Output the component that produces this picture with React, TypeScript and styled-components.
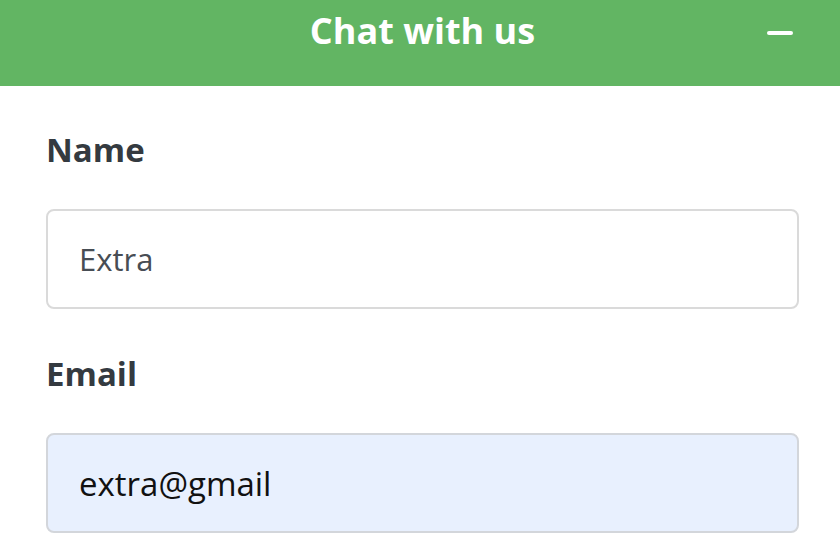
import React, { useState } from "react";
import styled, { createGlobalStyle } from "styled-components";

const Global = createGlobalStyle`
  html, body {
    margin: 0;
    padding: 0;
    background: #ffffff;
    overflow: hidden;
  }
  * {
    box-sizing: border-box;
  }
`;

function App() {
  const [name, setName] = useState("Extra");
  const [email, setEmail] = useState("extra@gmail");

  return (
    <>
      <Global />
      <S.Widget>
        <S.Header>
          <span />
          <S.Title>Chat with us</S.Title>
          <S.MinButton aria-label="Minimize">
            <S.MinBar />
          </S.MinButton>
        </S.Header>
        <S.Form>
          <S.Field>
            <S.Label htmlFor="name">Name</S.Label>
            <S.Input id="name" value={name} onChange={(e) => setName(e.target.value)} />
          </S.Field>
          <S.Field>
            <S.Label htmlFor="email">Email</S.Label>
            <S.Input
              id="email"
              $autofilled
              value={email}
              onChange={(e) => setEmail(e.target.value)}
            />
          </S.Field>
        </S.Form>
      </S.Widget>
    </>
  );
}

const S = {
  Widget: styled.div`
    width: 845px;
    height: 544px;
    background: #fff;
    font-family: "Open Sans", "Noto Sans", sans-serif;
  `,

  Header: styled.div`
    height: 86px;
    background: #62b563;
    display: grid;
    grid-template-columns: 1fr auto 1fr;
    align-items: start;
    padding: 13px 52px 0 52px;
  `,

  Title: styled.h1`
    margin: 0;
    color: #fff;
    font-size: 36px;
    font-weight: 700;
    line-height: 36px;
  `,

  MinButton: styled.button`
    justify-self: end;
    margin-top: 2px;
    background: none;
    border: none;
    padding: 0;
    width: 26px;
    height: 36px;
    display: flex;
    align-items: center;
    cursor: pointer;
  `,

  MinBar: styled.span`
    display: block;
    width: 26px;
    height: 4px;
    border-radius: 2px;
    background: #fff;
  `,

  Form: styled.div`
    padding: 32px 46px 0 46px;
    display: flex;
    flex-direction: column;
    gap: 33px;
  `,

  Field: styled.div`
    display: flex;
    flex-direction: column;
    gap: 27px;
  `,

  Label: styled.label`
    color: #343a40;
    font-size: 33px;
    font-weight: 700;
    line-height: 64px;
    height: 64px;
  `,

  Input: styled.input<{ $autofilled?: boolean }>`
    width: 100%;
    height: 100px;
    border: 2px solid ${(p) => (p.$autofilled ? "#d3d6db" : "#dadada")};
    border-radius: 8px;
    background: ${(p) => (p.$autofilled ? "#e8f0fe" : "#fff")};
    color: ${(p) => (p.$autofilled ? "#111" : "#474d54")};
    font-family: "Open Sans", "Noto Sans", sans-serif;
    font-size: ${(p) => (p.$autofilled ? "33px" : "31px")};
    padding: 0 31px;
    outline: none;
  `,
};

export default App;
